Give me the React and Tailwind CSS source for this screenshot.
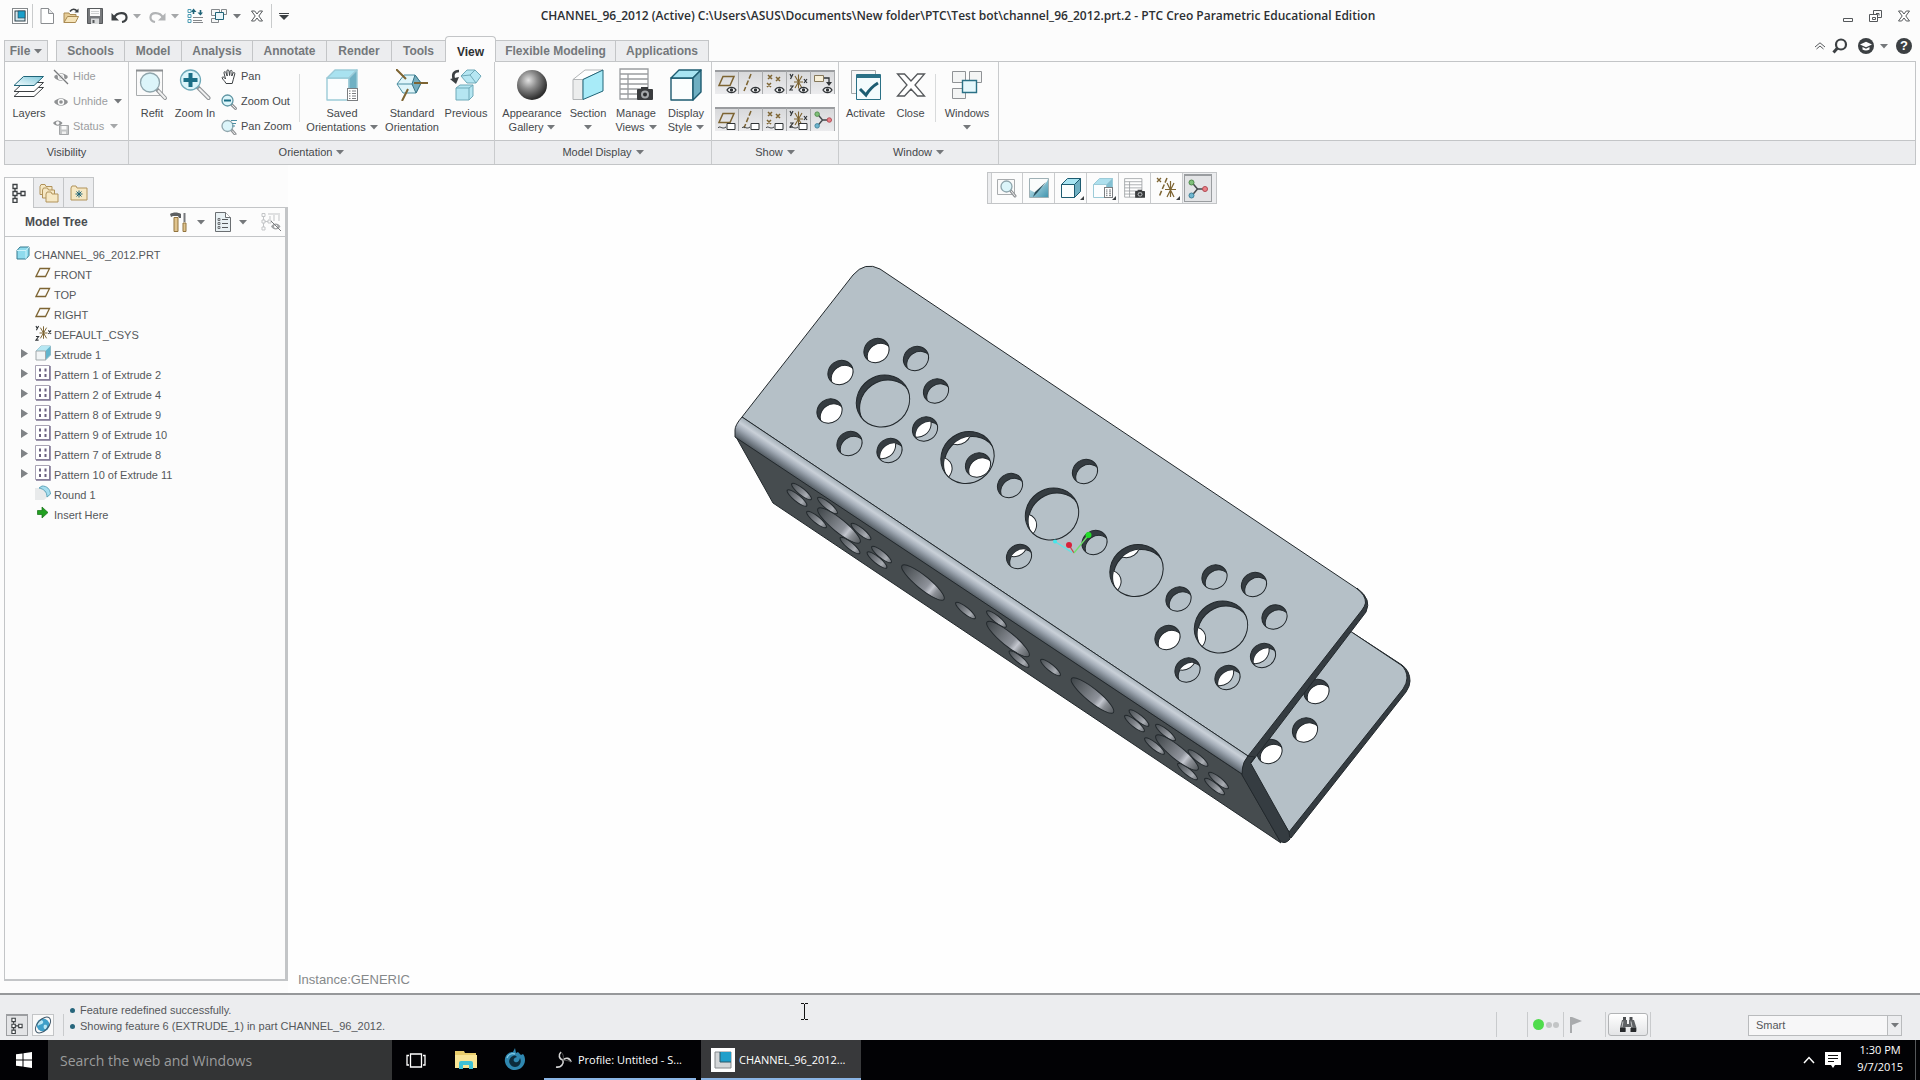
import clsx from 'clsx';

const INK = '#3c4043';
const TEAL = '#1f6478';
const GOLD = '#7d6432';

/* ---------- small shared pieces ---------- */

function Icon({ w = 16, h = 16, className, children }) {
  return (
    <svg width={w} height={h} viewBox={`0 0 ${w} ${h}`} fill="none" className={clsx('shrink-0', className)}>
      {children}
    </svg>
  );
}

function Caret({ className = 'text-[#75787b]' }) {
  return (
    <Icon w={8} h={5} className={className}>
      <path d="M0 0h8L4 4.6z" fill="currentColor" />
    </Icon>
  );
}

/* ---------- icons ---------- */

function CreoLogo({ size = 16 }) {
  return (
    <svg width={size} height={size} viewBox="0 0 16 16" className="shrink-0">
      <rect x="0.5" y="0.5" width="15" height="15" fill="#fff" stroke="#85898c" />
      <rect x="3" y="3" width="10" height="10" fill="#cfe6ee" stroke="#2b3f49" />
      <rect x="6" y="3" width="7" height="7" fill="#1a9fca" stroke="#2b3f49" strokeWidth="0.6" />
    </svg>
  );
}

function NewIcon() {
  return (
    <Icon w={14} h={16}>
      <path d="M1 .5h7.500l5 5v10H1z" fill="#fff" stroke="#8a8d90" />
      <path d="M8.500.5v5h5" fill="#e4e6e8" stroke="#8a8d90" />
    </Icon>
  );
}

function OpenIcon() {
  return (
    <Icon w={17} h={16}>
      <path d="M1 14.500V5h5l1 1.500h6V9" fill="#e6cd98" stroke="#a98a52" />
      <path d="M1 14.500 4.500 8.500h11l-3 6z" fill="#f5e3b8" stroke="#a98a52" />
      <path d="M7 3.500c2-3 5-3 7-.5" stroke={INK} strokeWidth="1.6" />
      <path d="M15.500.5v4h-4z" fill={INK} />
    </Icon>
  );
}

function SaveIcon() {
  return (
    <Icon>
      <path d="M.5.5h15v15H.5z" fill="#77797c" stroke="#56595c" />
      <path d="M3 1h10v7H3z" fill="#fafafa" />
      <path d="M4 10.500h8V16H4z" fill="#d9dbdc" />
      <path d="M5.500 12h2v3h-2z" fill="#55585b" />
      <path d="M4 3.500h8M4 5.500h8" stroke="#cfd1d2" />
    </Icon>
  );
}

function UndoIcon({ flip, color = INK }) {
  return (
    <Icon w={17} h={13} className={flip ? '-scale-x-100' : ''}>
      <path d="M3 7.500c3-5.500 12-6 12.500-.5.2 2.500-1.500 4.500-4.500 5" stroke={color} strokeWidth="2.2" />
      <path d="M.5 3v7.500H8z" fill={color} />
    </Icon>
  );
}

function RegenIcon() {
  return (
    <Icon>
      <path d="M1 1.500h3v3H1zM1 6.500h3v3H1zM1 11.500h3v3H1z" stroke="#4b9bb3" />
      <path d="M6 9.500h10M6 12.500h9M6 14.500h10" stroke="#85888b" />
      <path d="M6.500 6V3M13.500 2v4" stroke={TEAL} strokeWidth="1.6" />
      <path d="M4 4 6.500.5 9.500 4zM10.500 4.500l3 3 2.500-3z" fill={TEAL} />
    </Icon>
  );
}

function CascadeIcon() {
  return (
    <Icon>
      <path d="M.5 1.500h8v6h-8zM.5 10.500h7v4h-7zM10.500 1.500h5v5h-5z" fill="#f6f7f7" stroke="#85898c" />
      <path d="M4.500 4.500h8v7h-8z" fill="#e9f6fa" stroke={TEAL} />
    </Icon>
  );
}

function CrossIcon({ s = 12, color = '#55585b' }) {
  return (
    <svg width={s} height={s} viewBox="0 0 12 12" fill="#fff" className="shrink-0">
      <path
        d="M.5 1h3.2L6 4l2.300-3h3.200L7.800 6l3.700 5H8.300L6 8l-2.300 3H.5l3.700-5z"
        stroke={color}
      />
    </svg>
  );
}

function LayersIcon() {
  return (
    <Icon w={32} h={32}>
      <path d="M10.500 18.500h20l-9.500 9H1z" fill="#fff" stroke={INK} />
      <path d="M10.500 13.500h20l-9.500 9H1z" fill="#fff" stroke={INK} />
      <path d="M10.500 7.500h20l-9.500 9H1z" fill="url(#layerFill)" stroke={TEAL} />
      <defs>
        <linearGradient id="layerFill" x1="0" y1="1" x2="1" y2="0">
          <stop stopColor="#f4fcfe" />
          <stop offset="1" stopColor="#7fc8da" />
        </linearGradient>
      </defs>
    </Icon>
  );
}

function EyeShape({ color = '#8f9193' }) {
  return (
    <>
      <path d="M1 8c3.500-5 10.500-5 14 0-3.500 5-10.500 5-14 0z" fill={color} />
      <circle cx="8" cy="8" r="3.2" fill="#fafafa" />
      <circle cx="8" cy="8" r="1.8" fill={color} />
    </>
  );
}

function HideIcon() {
  return (
    <Icon>
      <EyeShape />
      <path d="m1 1 14 14" stroke="#fafafa" strokeWidth="3" />
      <path d="m1 1 14 14" stroke="#77797b" strokeWidth="1.2" />
    </Icon>
  );
}

function UnhideIcon() {
  return (
    <Icon>
      <EyeShape />
    </Icon>
  );
}

function StatusIcon() {
  return (
    <Icon>
      <path d="M0 4c2.500-3.500 7-3.500 9.500 0-2.500 3.500-7 3.500-9.500 0z" fill="#8f9193" />
      <circle cx="4.7" cy="4" r="1.8" fill="#fafafa" />
      <path d="M6.500 6.500h9v9h-9z" fill="#c3c5c6" stroke="#a3a5a7" />
      <path d="M8.500 7h5v3.500h-5z" fill="#fafafa" />
      <path d="M9 12.500h4V15H9z" fill="#f0f0f0" />
    </Icon>
  );
}

function Glass({ cx, cy, r, hx, hy, sw = 4, rim = '#8fa5ac', children }) {
  return (
    <>
      <path d={`M${cx + r * 0.7} ${cy + r * 0.7}L${hx} ${hy}`} stroke="#8f9295" strokeWidth={sw} strokeLinecap="round" />
      <path d={`M${cx + r * 0.9} ${cy + r * 0.9}L${hx} ${hy}`} stroke="#f0f0f0" strokeWidth={sw - 2} strokeLinecap="round" />
      <circle cx={cx} cy={cy} r={r} fill="#dcf5fa" stroke={rim} strokeWidth="1.3" />
      {children}
    </>
  );
}

function RefitIcon() {
  return (
    <Icon w={32} h={32}>
      <path d="M.5 1.500h26v25H.5z" fill="#fafafa" stroke="#a9acae" />
      <path d="M0 1.500h27" stroke="#8b8e91" strokeWidth="2" />
      <Glass cx={14} cy={13.5} r={9.5} hx={29} hy={29} />
    </Icon>
  );
}

function ZoomInIcon() {
  return (
    <Icon w={32} h={32}>
      <Glass cx={11.5} cy={11} r={10} hx={29.5} hy={29} rim="#6fa9b8">
        <path d="M11.500 4v14M4.500 11h14" stroke="#1b6f86" strokeWidth="4" />
      </Glass>
    </Icon>
  );
}

function PanIcon() {
  return (
    <Icon>
      <path
        d="M5 14.500c-1-2.500-3.500-4-3.800-5.600-.2-1.300 1.300-1.300 2.300 0L4.500 10 3 4c-.3-1.500 1.400-1.900 1.900-.5L6.200 7 5.900 2c0-1.500 1.900-1.500 2.100 0L8.600 6.500l.6-4.300c.3-1.300 2-1 1.900.4L10.800 7l1.300-3c.6-1.100 2-.5 1.700.8l-1.600 6-1 3.700z"
        fill="#fff"
        stroke={INK}
      />
    </Icon>
  );
}

function ZoomOutIcon() {
  return (
    <Icon>
      <Glass cx={6.5} cy={6.5} r={5.5} hx={14.5} hy={14.5} sw={3} rim="#5f95a3">
        <path d="M3 6.500h7" stroke="#1b6f86" strokeWidth="2" />
      </Glass>
    </Icon>
  );
}

function PanZoomIcon() {
  return (
    <Icon>
      <Glass cx={6.5} cy={7} r={5.5} hx={14} hy={15} sw={3} />
      <path d="M10 1.500h6M11 4.500h4M11 7h3" stroke="#4c8fa3" />
    </Icon>
  );
}

function Cube({ front, top, side, line, x = 0, y = 0, s = 30, d = 9 }) {
  const f = s - d;
  return (
    <g stroke={line} strokeLinejoin="round" strokeWidth={s > 20 ? 1.4 : 1}>
      <path d={`M${x} ${y + d}h${f}v${f}h${-f}z`} fill={front} />
      <path d={`M${x} ${y + d}l${d} ${-d}h${f}l${-d} ${d}z`} fill={top} />
      <path d={`M${x + f} ${y + d}l${d} ${-d}v${f}l${-d} ${d}z`} fill={side} />
    </g>
  );
}

function ListSheet({ x, y, w, h }) {
  const rows = [0, 1, 2, 3].map((i) => y + 2.5 + (i * (h - 4)) / 3.2);
  return (
    <g>
      <rect x={x} y={y} width={w} height={h} fill="#fff" stroke="#7a7d80" />
      {rows.map((r) => (
        <path key={r} d={`M${x + 1.5} ${r}h1.500M${x + 4.5} ${r}h${w - 6}`} stroke="#7a7d80" />
      ))}
    </g>
  );
}

function SavedOrientIcon({ small }) {
  if (small) {
    return (
      <Icon w={20} h={20}>
        <Cube s={19} d={6} x={0.5} y={0.5} front="#fcfeff" top="#aee0ee" side="#83c0d2" line="#9ccbd8" />
        <ListSheet x={11.5} y={9.5} w={8} h={10} />
      </Icon>
    );
  }
  return (
    <Icon w={32} h={32}>
      <Cube s={30} d={8} x={1} y={1} front="#fbfdfe" top="#a9e2f0" side="#6fb0c3" line="#9ccbd8" />
      <ListSheet x={21.5} y={19.5} w={10} h={12} />
    </Icon>
  );
}

function StandardOrientIcon() {
  return (
    <Icon w={32} h={32}>
      <path d="M8 6h11l6 8-5 10H7L1 15z" fill="#dff5fa" stroke="#4b8da0" />
      <path d="m19 6-3 9 4 9 5-10z" fill="#76aebf" stroke="#3a7688" />
      <path d="M1 15h15" stroke="#4b8da0" />
      <path d="m0 0 10 10M18 14h14M12 20 6 32" stroke={GOLD} strokeWidth="2" />
    </Icon>
  );
}

function PreviousIcon() {
  return (
    <Icon w={32} h={32}>
      <path d="m11 7 6-6h8l6 6-5 7h-9z" fill="#b5e6f2" stroke="#6fa9b8" />
      <path d="m11 7 9-1 5-5M20 6l6 8" stroke="#6fa9b8" />
      <path d="m6 19 4-3h13v11l-4 4H6z" fill="#b5e6f2" stroke="#6fa9b8" />
      <path d="M6 19h13v12M19 19l4-3" stroke="#6fa9b8" />
      <path d="M9 2C4 2 2 5 4 11" stroke={INK} strokeWidth="2.6" />
      <path d="m0 10 9-2-3 7z" fill={INK} />
    </Icon>
  );
}

function SphereIcon() {
  return (
    <Icon w={32} h={32}>
      <defs>
        <radialGradient id="sphere" cx="0.38" cy="0.34" r="0.65">
          <stop stopColor="#e2e2e2" />
          <stop offset="0.45" stopColor="#8a8a8a" />
          <stop offset="1" stopColor="#2e2e2e" />
        </radialGradient>
      </defs>
      <circle cx="16" cy="16" r="15" fill="url(#sphere)" />
    </Icon>
  );
}

function SectionIcon() {
  return (
    <Icon w={32} h={32}>
      <path d="M1 10.500 13 1h18L11 10.500z" fill="#fff" stroke="#b2b5b7" />
      <path d="M1 10.500h10v20H1z" fill="#eceded" stroke="#b2b5b7" />
      <path d="M11 10.500 31 1v21l-20 8.500z" fill="#a8ebf8" stroke={TEAL} />
    </Icon>
  );
}

function TableCameraIcon({ small }) {
  return (
    <svg width={small ? 21 : 34} height={small ? 21 : 34} viewBox="0 0 34 34" fill="none" className="shrink-0">
      <path d="M1 1h28v30H1z" fill="#fff" stroke="#9a9da0" strokeWidth="1.3" />
      <path d="M1 6h28M1 11h28M1 16h28M1 21h28M1 26h20M9 6v25" stroke="#9a9da0" strokeWidth="1.3" />
      <rect x="18" y="21" width="16" height="11" rx="1" fill="#3a3c3e" />
      <path d="M22 21v-2h7v2z" fill="#3a3c3e" />
      <circle cx="26" cy="26.5" r="4" fill="#a5a8aa" />
      <circle cx="26" cy="26.5" r="2" fill="#2c2e30" />
    </svg>
  );
}

function DisplayStyleIcon({ small }) {
  const size = small ? 20 : 32;
  return (
    <Icon w={size} h={size}>
      <Cube
        s={small ? 19 : 30}
        d={small ? 6 : 8}
        x={small ? 0.5 : 1}
        y={small ? 0.5 : 1}
        front="#fbfefe"
        top="#a8e4f2"
        side="#6fafc2"
        line="#1d5b70"
      />
    </Icon>
  );
}

function ActivateIcon() {
  return (
    <Icon w={32} h={32}>
      <path d="M1.500 1.500h24v23h-24z" fill="#f7f7f7" stroke="#a5a8aa" />
      <path d="M6.500 5.500h24v25h-24z" fill="#f3fbfd" stroke="#2b7186" />
      <path d="M6 7.500h25" stroke="#2b7186" strokeWidth="3" />
      <path d="m10 20 6 6c3-5 7-9 12-12" stroke="#1b5c72" strokeWidth="3" />
    </Icon>
  );
}

function CloseBigIcon() {
  return (
    <Icon w={30} h={32}>
      <path
        d="M1.500 5h7L15 12l6.500-7h7L19 16l9.500 11h-7L15 20l-6.500 7h-7L11 16z"
        fill="#fff"
        stroke="#55585b"
        strokeWidth="1.3"
      />
    </Icon>
  );
}

function WindowsIcon() {
  return (
    <Icon w={32} h={32}>
      <path d="M1.500 2.500h13v11h-13zM18.500 2.500h12v11h-12zM1.500 19.500h13v10h-13z" fill="#f4f5f5" stroke="#909396" />
      <path d="M11.500 11.500h14v12h-14z" fill="#e6f8fc" stroke="#2b7186" strokeWidth="1.4" />
    </Icon>
  );
}

function TinyEye() {
  return (
    <g>
      <path d="M10 17c2-3.500 7-3.500 9 0-2 3.500-7 3.500-9 0z" fill="#fff" stroke="#303437" strokeWidth="1.3" />
      <circle cx="14.5" cy="17" r="1.7" fill="#303437" />
    </g>
  );
}

function TinyTag() {
  return (
    <g>
      <path d="M10 13.500h8v6h-8z" fill="#fff" stroke="#303437" />
      <path d="M1 18c2-3 4 2 8-1" stroke="#303437" />
    </g>
  );
}

function DatumGlyph({ kind }) {
  const stroke = { stroke: GOLD, strokeWidth: 1.5 };
  switch (kind) {
    case 'plane':
      return <path d="M6 3.500h11l-4 9H2z" {...stroke} />;
    case 'axis':
      return <path d="M10 1 3 18" {...stroke} strokeDasharray="5 2" />;
    case 'point':
      return <path d="m3 2 4 4m0-4L3 6M11 4l4 4m0-4-4 4M2 10l4 4m0-4-4 4" {...stroke} />;
    case 'csys':
      return (
        <g>
          <path d="M9.500 1.500v14M5 9h9M6 3l7 12M13 3 6 15" {...stroke} strokeWidth="1.1" />
          <path d="m1 1 1.500 3M4 1 1.500 6M1 13h3l-3 4h3M15 6l3 4m0-4-3 4" stroke="#303437" strokeWidth="1.2" />
        </g>
      );
    case 'annot':
      return (
        <g>
          <path d="M1.500 2.500h9v6h-9z" fill="#f7efd8" stroke="#85785a" />
          <path d="M11 5h5v6" stroke="#303437" strokeWidth="1.3" />
          <path d="M13 9h6l-3 4z" fill="#303437" />
        </g>
      );
    default:
      return null;
  }
}

function SpinCenter({ size = 20 }) {
  return (
    <svg width={size} height={size} viewBox="0 0 20 20" fill="none" className="shrink-0">
      <path d="m3.500 3 6 7h8M9.500 10l-6 7" stroke="#44484b" strokeWidth="1.5" />
      <circle cx="3.5" cy="3.5" r="2.5" fill="#7fc07a" stroke="#4f8b4b" />
      <circle cx="17" cy="10" r="2.5" fill="#ea7f86" stroke="#b04a52" />
      <circle cx="3.5" cy="16.5" r="2.5" fill="#6fb6cf" stroke="#3e8199" />
    </svg>
  );
}

function SearchDarkIcon() {
  return (
    <Icon>
      <circle cx="9" cy="6.5" r="5" stroke={INK} strokeWidth="2.2" />
      <path d="m5.500 10-4 4.500" stroke={INK} strokeWidth="3" />
    </Icon>
  );
}

function LearnIcon() {
  return (
    <Icon>
      <circle cx="8" cy="8" r="8" fill={INK} />
      <path d="m2 6.500 6-2.800 6 2.800-6 2.800z" fill="#fff" />
      <path d="M4.500 9v2.500c2 1.300 5 1.300 7 0V9L8 10.700z" fill="#fff" />
    </Icon>
  );
}

function HelpIcon() {
  return (
    <span className="flex size-4 items-center justify-center rounded-full bg-[#3c4043] text-[13px] leading-4 font-bold text-white">
      ?
    </span>
  );
}

function TreeGlyph() {
  return (
    <Icon w={14} h={20}>
      <path d="M1 1.500h4v4H1zM1 8.500h4v4H1zM1 15.500h4v4H1zM9 8.500h4v4H9z" fill="#fff" stroke={INK} strokeWidth="1.3" />
      <path d="M3 6v2M3 13v2M5 10.500h4" stroke={INK} strokeWidth="1.3" />
    </Icon>
  );
}

function Folder({ x, y, w = 12, h = 9 }) {
  return (
    <path
      d={`M${x} ${y + h}v${-h + 1}l1-2h4l1 2h${w - 6}v${h - 1}z`}
      fill="#f6e8c4"
      stroke="#b1935b"
    />
  );
}

function FoldersIcon() {
  return (
    <Icon w={20} h={20}>
      <Folder x={1} y={2.5} />
      <Folder x={3.5} y={6} />
      <Folder x={7} y={10} />
    </Icon>
  );
}

function FavFolderIcon() {
  return (
    <Icon w={18} h={18}>
      <Folder x={1} y={3} w={16} h={13} />
      <path d="M9 6.500v7M5.500 10h7M6.500 7.500l5 5M11.500 7.500l-5 5" stroke={TEAL} />
    </Icon>
  );
}

function ToolsIcon() {
  return (
    <Icon w={17} h={20}>
      <path d="M0 2c3-2 8-2 11 0v4H9L8 4H3L1 5z" fill="#5c5f62" />
      <path d="M4 5.500h4v14H4z" fill="#e0c48e" stroke="#92743e" />
      <path d="M14.500 1v9" stroke="#77797c" strokeWidth="2" />
      <path d="M13 11h3v8.500h-3z" fill="#e0c48e" stroke="#92743e" />
    </Icon>
  );
}

function SettingsDocIcon() {
  return (
    <Icon w={16} h={20}>
      <path d="M.5.5h10l5 5v14H.5z" fill="#e9f1f4" stroke="#6b6f72" />
      <path d="M10.500.5v5h5" fill="#fff" stroke="#6b6f72" />
      <path d="M7 7.500h6M7 11.500h6M7 15.500h6" stroke="#55585b" />
      <path d="M3 6.500h2v2H3zM3 10.500h2v2H3zM3 14.500h2v2H3z" stroke="#55585b" strokeWidth="0.8" />
    </Icon>
  );
}

function TreeHideIcon() {
  return (
    <Icon w={20} h={20}>
      <path d="M1 1.500h3v3H1zM1 8h3v3H1zM1 15h3v3H1zM7 8h3v3H7zM7 2h12M9 4v3M13 3v6M18 3v6M2.500 5v3M2.500 11v4M4 9.500h3" stroke="#c3c5c7" />
      <path d="M10 14.500c2.500-4 7-4 9.500 0-2.500 4-7 4-9.500 0z" fill="#a1a3a5" />
      <circle cx="14.7" cy="14.5" r="1.7" fill="#fff" />
      <path d="m10 9 10 10" stroke="#77797c" />
    </Icon>
  );
}

function PartIcon() {
  return (
    <Icon w={14} h={14}>
      <path d="M1 4.500 4 1h9v8.500L10 13H1z" fill="#8fdbed" stroke="#357b90" />
      <path d="M1 4.500h9V13M10 4.500 13 1" stroke="#cff3fa" />
    </Icon>
  );
}

function PlaneIcon() {
  return (
    <Icon w={16} h={16}>
      <path d="M5 3.500h9.500l-4 8H1z" stroke={GOLD} strokeWidth="1.3" />
    </Icon>
  );
}

function CsysIcon() {
  return (
    <svg width="17" height="16" viewBox="0 0 19 18" fill="none" className="shrink-0">
      <DatumGlyph kind="csys" />
    </svg>
  );
}

function ExtrudeIcon() {
  return (
    <Icon w={16} h={16}>
      <path d="m1 6 5-5h9.500v9l-5 5z" fill="#62b4cc" stroke="#8cb9c6" />
      <path d="M1 6h9.500l5-5H6z" fill="#b6e7f3" />
      <path d="M1 6h9.500v9H1z" fill="#f1f4f5" stroke="#a1a8ab" />
    </Icon>
  );
}

function PatternIcon() {
  return (
    <Icon w={16} h={16}>
      <path d="M.5.5h14v14H.5z" fill="#fff" stroke="#a9a3b5" />
      <path d="M15 1v14H1" stroke="#7c7391" strokeWidth="1.5" />
      <path d="M4 3.500h2v3H4zM9.500 3.500h2v3h-2zM4 9h2v3H4zM9.500 9h2v3h-2z" fill="#6b617f" />
    </Icon>
  );
}

function RoundIcon() {
  return (
    <Icon w={16} h={16}>
      <path d="M0 3h7c5 1 7 4 7 8l-5 4H0z" fill="#e8eaeb" />
      <path d="m4 3 3-2c5 0 8 3 8.500 8L12 12c0-5-3-8-8-9z" fill="#a5def0" stroke="#5fa4b9" />
    </Icon>
  );
}

function InsertIcon() {
  return (
    <Icon w={16} h={16}>
      <path d="M2.500 5.500h4.500V2l6 5.500-6 5.500V9.500H2.500z" fill="#21a021" stroke="#156d15" strokeWidth="0.7" />
    </Icon>
  );
}

/* ---------- title bar ---------- */

function IconButton({ label, className, children }) {
  return (
    <button type="button" aria-label={label} className={clsx('flex items-center justify-center', className)}>
      {children}
    </button>
  );
}

function TitleBar() {
  return (
    <header className="flex h-8 items-center pl-3">
      <CreoLogo />
      <span className="ml-1 h-6 w-px bg-[#c9cbcc]" />
      <IconButton label="New" className="ml-0.5 w-6"><NewIcon /></IconButton>
      <IconButton label="Open" className="w-6"><OpenIcon /></IconButton>
      <IconButton label="Save" className="w-6"><SaveIcon /></IconButton>
      <IconButton label="Undo" className="w-6"><UndoIcon /></IconButton>
      <IconButton label="Undo list" className="w-3"><Caret className="text-[#a5a7a9]" /></IconButton>
      <IconButton label="Redo" className="w-7"><UndoIcon flip color="#b1b3b5" /></IconButton>
      <IconButton label="Redo list" className="w-2"><Caret className="text-[#a5a7a9]" /></IconButton>
      <IconButton label="Regenerate" className="ml-1 w-6"><RegenIcon /></IconButton>
      <IconButton label="Windows" className="w-6"><CascadeIcon /></IconButton>
      <IconButton label="Windows list" className="w-3"><Caret /></IconButton>
      <IconButton label="Close window" className="w-7"><CrossIcon /></IconButton>
      <span className="h-6 w-px bg-[#c9cbcc]" />
      <IconButton label="Customize" className="w-6">
        <Icon w={10} h={7}>
          <path d="M0 .5h10" stroke={INK} />
          <path d="M0 2h10L5 7z" fill={INK} />
        </Icon>
      </IconButton>
      <h1 className="min-w-0 flex-1 truncate text-center font-['Open_Sans','Noto_Sans',sans-serif] text-[12px] leading-4 font-semibold text-[#2c2f32]">
        CHANNEL_96_2012 (Active) C:\Users\ASUS\Documents\New folder\PTC\Test bot\channel_96_2012.prt.2 - PTC Creo Parametric Educational Edition
      </h1>
      <div className="flex w-[300px] items-center justify-end gap-4 pr-[10px]">
        <IconButton label="Minimize">
          <Icon w={10} h={12}><path d="M.5 8.500h9v3h-9z" stroke="#55585b" /></Icon>
        </IconButton>
        <IconButton label="Restore">
          <Icon w={13} h={12}>
            <path d="M4.500.5h8v7h-8z" stroke="#55585b" />
            <path d="M.5 4.500h8v7h-8z" fill="#fff" stroke="#55585b" />
            <path d="M3.500 7.500h3v2h-3zM7 3.500h3v2" stroke="#55585b" />
          </Icon>
        </IconButton>
        <IconButton label="Close"><CrossIcon /></IconButton>
      </div>
    </header>
  );
}

/* ---------- ribbon ---------- */

const TABS = [
  { name: 'Schools', width: 'w-[69px]' },
  { name: 'Model', width: 'w-[57px]' },
  { name: 'Analysis', width: 'w-[71px]' },
  { name: 'Annotate', width: 'w-[74px]' },
  { name: 'Render', width: 'w-[65px]' },
  { name: 'Tools', width: 'w-[53px]' },
  { name: 'View', width: 'w-[51px]', active: true },
  { name: 'Flexible Modeling', width: 'w-[120px]' },
  { name: 'Applications', width: 'w-[93px]' },
];

function TabBar() {
  return (
    <nav className="relative z-10 -mb-px flex h-[30px] items-end pl-1 text-[12px] font-bold text-[#74787b]">
      <button type="button" className="mr-2 flex h-[22px] w-11 items-center justify-center gap-1 border border-[#c3c5c7] bg-[#ecedef]">
        File <Caret />
      </button>
      {TABS.map((tab, i) => (
        <button
          key={tab.name}
          type="button"
          className={clsx(
            'border-[#c3c5c7] whitespace-nowrap',
            tab.width,
            tab.active
              ? 'h-[26px] rounded-t-sm border border-b-0 bg-[#fcfcfc] pt-1 text-[#2c3033]'
              : 'h-[22px] border-y bg-[#ecedef]',
            i === 0 && 'border-l',
            !tab.active && i !== 5 && 'border-r',
          )}
        >
          {tab.name}
        </button>
      ))}
      <div className="mb-2 ml-auto flex h-4 items-center pr-2">
        <IconButton label="Minimize ribbon" className="w-5">
          <Icon w={12} h={8}>
            <path d="M1 5 6 .8 11 5M2.500 7 6 4l3.500 3" stroke="#55585b" />
          </Icon>
        </IconButton>
        <IconButton label="Command search" className="mr-1 w-5"><SearchDarkIcon /></IconButton>
        <IconButton label="Learning" className="w-6"><LearnIcon /></IconButton>
        <IconButton label="Learning list" className="w-3"><Caret /></IconButton>
        <IconButton label="Help" className="ml-1.5"><HelpIcon /></IconButton>
      </div>
    </nav>
  );
}

function BigButton({ icon, lines, caret, caretBelow, width }) {
  return (
    <button type="button" className={clsx('flex shrink-0 flex-col items-center pt-1 leading-[14px] whitespace-nowrap', width)}>
      <span className="flex h-[38px] items-center justify-center">{icon}</span>
      <span className="mt-0.5">{lines[0]}</span>
      {lines[1] && (
        <span className="flex items-center gap-1">
          {lines[1]}
          {caret && <Caret />}
        </span>
      )}
      {caretBelow && <span className="flex h-[14px] items-center"><Caret /></span>}
    </button>
  );
}

function SmallButton({ icon, label, caret, disabled }) {
  return (
    <button
      type="button"
      disabled={disabled}
      className={clsx('flex h-[25px] items-center gap-1 whitespace-nowrap', disabled && 'text-[#9b9da0]')}
    >
      {icon}
      {label}
      {caret && <Caret className={clsx('ml-0.5', caret)} />}
    </button>
  );
}

function Group({ label, caret, width, children }) {
  return (
    <section className={clsx('flex shrink-0 flex-col border-r border-[#c9cbcd]', width)}>
      <div className="flex flex-1">{children}</div>
      <div className="flex h-6 items-center justify-center gap-1 border-t border-[#c3c5c7] bg-[#ecedef]">
        {label}
        {caret && <Caret />}
      </div>
    </section>
  );
}

function Divider() {
  return <span className="mt-3 h-12 w-px shrink-0 bg-[#d8dadb]" />;
}

const DATUMS = ['plane', 'axis', 'point', 'csys', 'annot'];

function ShowCell({ label, children }) {
  return (
    <button
      type="button"
      aria-label={label}
      className="flex h-6 w-6 items-center justify-center border-t-2 border-r border-t-[#9a9c9f] border-r-[#a9abad] bg-linear-to-b from-[#d8d9db] to-[#ececee]"
    >
      {children}
    </button>
  );
}

function ShowGroup() {
  return (
    <Group label="Show" caret width="w-[127px]">
      <div className="flex flex-col gap-[13px] pt-2 pl-[3px]">
        <div className="flex">
          {DATUMS.map((kind) => (
            <ShowCell key={kind} label={`${kind} display`}>
              <Icon w={20} h={21}>
                <DatumGlyph kind={kind} />
                <TinyEye />
              </Icon>
            </ShowCell>
          ))}
        </div>
        <div className="flex">
          {DATUMS.slice(0, 4).map((kind) => (
            <ShowCell key={kind} label={`${kind} tag display`}>
              <Icon w={20} h={21}>
                <DatumGlyph kind={kind} />
                <TinyTag />
              </Icon>
            </ShowCell>
          ))}
          <ShowCell label="Spin center"><SpinCenter size={18} /></ShowCell>
        </div>
      </div>
    </Group>
  );
}

function Ribbon() {
  return (
    <div className="mx-1 flex h-[104px] border border-[#c3c5c7] bg-[#fcfcfc] text-[11px] text-[#45484b]">
      <Group label="Visibility" width="w-[124px]">
        <BigButton icon={<LayersIcon />} lines={['Layers']} width="w-12" />
        <div className="flex flex-col pt-0.5">
          <SmallButton icon={<HideIcon />} label="Hide" disabled />
          <SmallButton icon={<UnhideIcon />} label="Unhide" caret="text-[#75787b]" disabled />
          <SmallButton icon={<StatusIcon />} label="Status" caret="text-[#a5a7a9]" disabled />
        </div>
      </Group>

      <Group label="Orientation" caret width="w-[366px]">
        <BigButton icon={<RefitIcon />} lines={['Refit']} width="w-[46px]" />
        <BigButton icon={<ZoomInIcon />} lines={['Zoom In']} width="w-10" />
        <div className="flex w-[84px] flex-col pt-0.5 pl-1.5">
          <SmallButton icon={<PanIcon />} label="Pan" />
          <SmallButton icon={<ZoomOutIcon />} label="Zoom Out" />
          <SmallButton icon={<PanZoomIcon />} label="Pan Zoom" />
        </div>
        <Divider />
        <BigButton icon={<SavedOrientIcon />} lines={['Saved', 'Orientations']} caret width="w-[84px]" />
        <BigButton icon={<StandardOrientIcon />} lines={['Standard', 'Orientation']} width="w-14" />
        <BigButton icon={<PreviousIcon />} lines={['Previous']} width="w-[52px]" />
      </Group>

      <Group label="Model Display" caret width="w-[217px]">
        <BigButton icon={<SphereIcon />} lines={['Appearance', 'Gallery']} caret width="w-[74px]" />
        <BigButton icon={<SectionIcon />} lines={['Section']} caretBelow width="w-[38px]" />
        <BigButton icon={<TableCameraIcon />} lines={['Manage', 'Views']} caret width="w-[58px]" />
        <BigButton icon={<DisplayStyleIcon />} lines={['Display', 'Style']} caret width="w-[42px]" />
      </Group>

      <ShowGroup />

      <Group label="Window" caret width="w-[160px]">
        <BigButton icon={<ActivateIcon />} lines={['Activate']} width="w-[53px]" />
        <BigButton icon={<CloseBigIcon />} lines={['Close']} width="w-[37px]" />
        <span className="w-1.5" />
        <Divider />
        <BigButton icon={<WindowsIcon />} lines={['Windows']} caretBelow width="w-[62px]" />
      </Group>

      <div className="flex flex-1 flex-col justify-end">
        <div className="h-6 border-t border-[#c3c5c7] bg-[#ecedef]" />
      </div>
    </div>
  );
}

/* ---------- model tree ---------- */

const TREE = [
  { label: 'FRONT', icon: PlaneIcon },
  { label: 'TOP', icon: PlaneIcon },
  { label: 'RIGHT', icon: PlaneIcon },
  { label: 'DEFAULT_CSYS', icon: CsysIcon },
  { label: 'Extrude 1', icon: ExtrudeIcon, open: true },
  { label: 'Pattern 1 of Extrude 2', icon: PatternIcon, open: true },
  { label: 'Pattern 2 of Extrude 4', icon: PatternIcon, open: true },
  { label: 'Pattern 8 of Extrude 9', icon: PatternIcon, open: true },
  { label: 'Pattern 9 of Extrude 10', icon: PatternIcon, open: true },
  { label: 'Pattern 7 of Extrude 8', icon: PatternIcon, open: true },
  { label: 'Pattern 10 of Extrude 11', icon: PatternIcon, open: true },
  { label: 'Round 1', icon: RoundIcon },
  { label: 'Insert Here', icon: InsertIcon },
];

function TreePanel() {
  return (
    <aside className="flex w-[288px] shrink-0 flex-col pt-3 pb-3 pl-1 text-[11px] text-[#55585b]">
      <div className="relative z-10 -mb-px flex">
        <IconButton label="Model Tree" className="h-[31px] w-[30px] border border-b-0 border-[#c3c5c7] bg-[#fcfcfc]">
          <TreeGlyph />
        </IconButton>
        <IconButton label="Folder Browser" className="h-[31px] w-[30px] border border-l-0 border-[#c3c5c7] bg-[#ecedef]">
          <FoldersIcon />
        </IconButton>
        <IconButton label="Favorites" className="h-[31px] w-[30px] border border-l-0 border-[#c3c5c7] bg-[#ecedef]">
          <FavFolderIcon />
        </IconButton>
      </div>
      <div className="flex flex-1 flex-col border border-r-3 border-b-2 border-[#c3c5c7] bg-[#fcfcfc]">
        <div className="flex h-[29px] items-center border-b border-[#c3c5c7] pr-1 pl-5">
          <h2 className="flex-1 text-[12px] font-bold text-[#4a4d50]">Model Tree</h2>
          <IconButton label="Tools"><ToolsIcon /></IconButton>
          <IconButton label="Tools list" className="ml-2 w-3"><Caret /></IconButton>
          <IconButton label="Settings" className="ml-2"><SettingsDocIcon /></IconButton>
          <IconButton label="Settings list" className="ml-1.5 w-3"><Caret /></IconButton>
          <IconButton label="Show" className="ml-3"><TreeHideIcon /></IconButton>
        </div>
        <ul className="pt-2">
          <li>
            <div className="flex h-5 items-center gap-1 pl-[11px]">
              <span className="-mt-1"><PartIcon /></span>
              CHANNEL_96_2012.PRT
            </div>
            <ul>
              {TREE.map((node) => (
                <li key={node.label} className="flex h-5 items-center pl-4">
                  <span className="flex w-[14px] shrink-0 items-center">
                    {node.open && (
                      <Icon w={7} h={9} className="mb-1">
                        <path d="M0 0v9l7-4.500z" fill="#808386" />
                      </Icon>
                    )}
                  </span>
                  <span className="mb-1 flex w-[19px] shrink-0 items-center"><node.icon /></span>
                  {node.label}
                </li>
              ))}
            </ul>
          </li>
        </ul>
      </div>
    </aside>
  );
}

/* ---------- graphics area ---------- */

const EDGE = '#22282c';
const FACE = '#b5c0c7';
const DARK = '#353c41';

// "see" lists the lower holes that show through, as offsets from the hole's centre
const BIG_HOLES = [
  { x: 883, y: 401, see: [] },
  { x: 967.5, y: 457.5, see: [[-28, 12], [-9, -25]], nested: [978, 465] },
  { x: 1052, y: 514, see: [[-28, 12]] },
  { x: 1136.5, y: 570.5, see: [[-28, 12], [-9, -25]] },
  { x: 1221, y: 627, see: [[-28, 12]] },
];

const OPEN_HOLES = [[876.5, 350.5], [840.5, 372.5], [829.5, 411], [1167.5, 637.5]];
const SHUT_HOLES = [
  [916, 358.5], [936, 391], [849.5, 443.5], [1010, 485.5], [1085, 471.5], [1094.5, 542.5],
  [1178.5, 599], [1214.5, 577], [1254, 584.5], [1274.5, 617],
];
const HALF_HOLES = [[889.5, 450.5], [925, 429], [1227.5, 677.5], [1263, 655.5]];
const SLIT_HOLES = [[1019, 556.5], [1187.5, 670]];
const LOWER_HOLES = [[1316.5, 691.5], [1305, 730], [1269.5, 751.5]];

const SMALL_HOLES = [
  ...OPEN_HOLES.map(([x, y]) => ({ x, y, open: true })),
  ...SHUT_HOLES.map(([x, y]) => ({ x, y, see: [] })),
  ...HALF_HOLES.map(([x, y]) => ({ x, y, see: [[-6.5, -4]] })),
  ...SLIT_HOLES.map(([x, y]) => ({ x, y, see: [[-4, -12]] })),
];

const WEB_BIG = [[839, 525.5], [923, 582.5], [1008, 639], [1092.5, 695.5], [1177, 752.5]];
const WEB_SMALL = [
  [801.5, 491.5], [797, 498], [827.5, 505.5], [816.5, 519.5], [861, 531.5], [850, 545.5], [881.5, 554.5], [877, 560],
  [965.5, 610.5], [996.5, 619], [1019, 659], [1050.5, 667.5], [1139, 718], [1134.5, 723.5], [1165.5, 732.5],
  [1154.5, 746], [1198, 758], [1187.5, 771.5], [1218.5, 780.5], [1214.5, 786.5],
];

function Oval({ x, y, big, ...rest }) {
  return (
    <ellipse
      cx={x}
      cy={y}
      rx={big ? 27.3 : 13}
      ry={big ? 25.3 : 11.7}
      transform={`rotate(-35 ${x} ${y})`}
      {...rest}
    />
  );
}

function Hole({ x, y, big, open, see = [], nested }) {
  const id = `h${Math.round(x)}-${Math.round(y)}`;
  return (
    <g>
      <clipPath id={id}><Oval x={x} y={y} big={big} /></clipPath>
      <clipPath id={`${id}i`}><Oval x={x + 3.3} y={y + 5} big={big} /></clipPath>
      <Oval x={x} y={y} big={big} fill={DARK} />
      <g clipPath={`url(#${id})`}>
        <Oval x={x + 3.3} y={y + 5} big={big} fill={open ? '#fff' : FACE} stroke={EDGE} />
        <g clipPath={`url(#${id}i)`}>
          {see.map(([dx, dy]) => (
            <Oval key={dx} x={x + dx} y={y + dy} fill="#fff" stroke={EDGE} />
          ))}
          {nested && <Hole x={nested[0]} y={nested[1]} open />}
        </g>
      </g>
      <Oval x={x} y={y} big={big} stroke={EDGE} fill="none" />
    </g>
  );
}

function WebHole({ x, y, big }) {
  return (
    <ellipse
      cx={x}
      cy={y}
      rx={big ? 27 : 12.5}
      ry={big ? 6.5 : 3.3}
      transform={`rotate(39 ${x} ${y})`}
      fill={big ? 'url(#boreBig)' : 'url(#bore)'}
      stroke={EDGE}
    />
  );
}

function ChannelModel() {
  return (
    <svg viewBox="288 165 1632 828" className="absolute inset-0 size-full" fill="none" strokeLinejoin="round">
      <defs>
        <linearGradient id="bend" gradientUnits="userSpaceOnUse" x1="995" y1="587" x2="984" y2="603.5">
          <stop stopColor="#a9b4bc" />
          <stop offset="0.25" stopColor="#c9d0d8" />
          <stop offset="0.5" stopColor="#a3acb7" />
          <stop offset="0.8" stopColor="#6f7881" />
          <stop offset="1" stopColor="#4e565c" />
        </linearGradient>
        <linearGradient id="bore">
          <stop stopColor="#4a5054" />
          <stop offset="0.45" stopColor="#7b7f85" />
          <stop offset="0.75" stopColor="#a9adb3" />
          <stop offset="1" stopColor="#6b6f74" />
        </linearGradient>
        <linearGradient id="boreBig">
          <stop stopColor="#3f4549" />
          <stop offset="0.3" stopColor="#666b70" />
          <stop offset="0.6" stopColor="#8f939b" />
          <stop offset="0.7" stopColor="#c3c6ce" />
          <stop offset="0.8" stopColor="#8b8f95" />
          <stop offset="1" stopColor="#565b5f" />
        </linearGradient>
      </defs>

      {/* lower flange */}
      <path d="M1353 633 1402 665Q1410 671 1410 681 1410 686 1406 692L1291 838 1285 832 1400 690z" fill={DARK} stroke={EDGE} />
      <path d="M1344 627 1401 665Q1407 670 1407 678 1407 683 1403 689L1289 832 1245 760z" fill={FACE} stroke={EDGE} />
      {LOWER_HOLES.map(([x, y]) => <Hole key={x} x={x} y={y} open />)}

      {/* web */}
      <path d="M735.5 436 773 503 1281 843 1242 774z" fill="#464c4f" stroke={EDGE} />
      {WEB_SMALL.map(([x, y]) => <WebHole key={x} x={x} y={y} />)}
      {WEB_BIG.map(([x, y]) => <WebHole key={x} x={x} y={y} big />)}

      {/* upper flange: rim first, then the face over it */}
      <path d="M1357 588Q1365 594 1367 600 1369 605 1366 612L1251 763 1246 757z" fill={DARK} stroke={EDGE} />
      <path
        d="M742 417 853 275Q865 261 880 269L1356 588Q1366 595 1365.5 603 1365 606 1362 610L1248 756z"
        fill={FACE}
        stroke={EDGE}
      />
      <path d="M742 417Q735 425 735 430V437L1242 774 1248 756z" fill="url(#bend)" stroke={EDGE} />

      {/* end face of the bend and web */}
      <path d="M1248 756Q1243 762 1242.5 768L1242 775 1280 841Q1285 845 1290 839L1289 832 1250.5 763 1255 757z" fill={DARK} stroke={EDGE} />

      {SMALL_HOLES.map((h) => <Hole key={`${h.x}-${h.y}`} {...h} />)}
      {BIG_HOLES.map((h) => <Hole key={h.x} big {...h} />)}

      {/* spin centre */}
      <path d="M1055 541.5 1072 552.500" stroke="#5fe3e6" strokeWidth="1.3" />
      <path d="M1069 545 1074 553" stroke="#c4424c" strokeWidth="1.3" />
      <path d="M1088.5 535 1074 553" stroke="#6fe06a" strokeWidth="1.3" />
      <circle cx="1055" cy="541.5" r="2" fill="#45e6ea" />
      <circle cx="1069" cy="545" r="3" fill="#d9213a" />
      <circle cx="1088.5" cy="535" r="3" fill="#22dc28" />
    </svg>
  );
}

function Corner() {
  return (
    <svg width="4" height="4" viewBox="0 0 4 4" className="absolute right-0.5 bottom-[3px]">
      <path d="M4 0v4H0z" fill={INK} />
    </svg>
  );
}

const VIEW_TOOLS = [
  {
    label: 'Refit',
    icon: (
      <Icon w={20} h={20}>
        <path d="M.5 1.500h17v15H.5z" fill="#fafafa" stroke="#a9acae" />
        <Glass cx={9.5} cy={8.5} r={5.5} hx={18} hy={18} sw={3} />
      </Icon>
    ),
  },
  {
    label: 'Repaint',
    icon: (
      <Icon w={20} h={20}>
        <defs>
          <linearGradient id="paint" x1="0" y1="0" x2="1" y2="1">
            <stop stopColor="#d9f3f9" />
            <stop offset="1" stopColor="#3f93ad" />
          </linearGradient>
        </defs>
        <path d="M.5.5h19v19H.5z" fill="url(#paint)" stroke="#9fb0b5" />
        <path d="M1 1h18C17 8 8 11 7 15l-6-3z" fill="#fafcfc" />
        <path d="M17 4 8 15l-4 4 2-5z" fill="#2a4f5c" />
      </Icon>
    ),
  },
  { label: 'Display Style', icon: <DisplayStyleIcon small />, menu: true },
  { label: 'Saved Orientations', icon: <SavedOrientIcon small />, menu: true },
  { label: 'View Manager', icon: <TableCameraIcon small /> },
  {
    label: 'Datum Display Filters',
    menu: true,
    icon: (
      <Icon w={22} h={22}>
        <path d="m1 1 4 4m0-4L1 5" stroke={GOLD} strokeWidth="1.3" />
        <path d="M11 1 3 20" stroke={GOLD} strokeWidth="1.5" strokeDasharray="5 2" />
        <path d="M14.500 4v16M9 12.500h11M11 6l7 14M18 6l-7 14" stroke={GOLD} strokeWidth="1.2" />
      </Icon>
    ),
  },
];

function GraphicsArea() {
  return (
    <main className="relative flex-1 overflow-hidden bg-[#fefefe]">
      <ChannelModel />
      <div className="relative flex justify-center pt-[7px] pr-1">
        <div className="flex h-8 border border-[#c3c5c7] bg-[#ecedef] px-[3px]">
          {VIEW_TOOLS.map((tool) => (
            <IconButton key={tool.label} label={tool.label} className="relative w-8 border-r border-[#c9cbcd] bg-[#fcfcfc] first:border-l">
              {tool.icon}
              {tool.menu && <Corner />}
            </IconButton>
          ))}
          <IconButton label="Spin Center" className="m-px w-7 border border-t-2 border-[#9a9da0] bg-[#e3e4e6]">
            <SpinCenter />
          </IconButton>
        </div>
      </div>
      <p className="absolute bottom-1 left-[10px] text-[13px] leading-[18px] text-[#85888a]">Instance:GENERIC</p>
    </main>
  );
}

/* ---------- status bar ---------- */

function StatusBar() {
  return (
    <footer className="relative flex h-[47px] shrink-0 items-end border-t-2 border-[#96989a] bg-[#ecedef] text-[11px] text-[#55585b]">
      <IconButton label="Toggle tree" className="mb-1 ml-1.5 size-[22px] border border-t-2 border-[#9c9ea1] bg-[#e3e4e6]">
        <svg width="12" height="17" viewBox="0 0 14 20" fill="none">
          <path d="M1 1.500h4v4H1zM1 8.500h4v4H1zM1 15.500h4v4H1zM9 8.500h4v4H9z" fill="#fff" stroke={INK} strokeWidth="1.3" />
          <path d="M3 6v2M3 13v2M5 10.500h4" stroke={INK} strokeWidth="1.3" />
        </svg>
      </IconButton>
      <IconButton label="Toggle browser" className="mb-1 ml-1 size-[22px] border border-[#c3c5c7] bg-[#f9f9f9]">
        <Icon w={18} h={18}>
          <circle cx="9" cy="9" r="6.5" fill="#3f9fc9" />
          <path d="M5 5c3-2 5 0 4 2s-4 1-5 3c-1-2 0-4 1-5zM10 9c3-1 4 1 2 4-2 1-3-2-2-4z" fill="#b9e6f4" />
          <ellipse cx="9" cy="9" rx="9.5" ry="5.5" transform="rotate(-48 9 9)" stroke="#41596b" />
        </Icon>
      </IconButton>
      <span className="mb-1 ml-[9px] h-[22px] w-px bg-[#c9cbcd]" />
      <ul className="mb-1.5 ml-1.5 flex-1">
        {['Feature redefined successfully.', 'Showing feature 6 (EXTRUDE_1) in part CHANNEL_96_2012.'].map((line) => (
          <li key={line} className="flex h-4 items-center gap-[5px]">
            <span className="size-[5px] rounded-full bg-[#27667c]" />
            {line}
          </li>
        ))}
      </ul>
      <div className="mb-[3px] flex h-[25px] items-center">
        <span className="h-full w-px bg-[#c9cbcd]" />
        <span className="ml-[30px] h-full w-px bg-[#c9cbcd]" />
        <span className="ml-[5px] size-[11px] rounded-full bg-[#4fdc4b]" />
        <span className="ml-[2px] size-1.5 rounded-full bg-[#c3c5c6]" />
        <span className="ml-px size-1.5 rounded-full bg-[#c3c5c6]" />
        <span className="ml-1 h-full w-px bg-[#c9cbcd]" />
        <Icon w={12} h={16} className="ml-1.5">
          <path d="M0 0h2v16H0z" fill="#a9abad" />
          <path d="m2 0 10 4-10 4z" fill="#a9abad" />
        </Icon>
        <span className="ml-[23px] h-full w-px bg-[#c9cbcd]" />
        <button type="button" aria-label="Search" className="ml-[2px] flex h-[23px] w-10 items-center justify-center rounded-[3px] border border-[#b1b3b5] bg-linear-to-b from-white to-[#e3e4e6]">
          <Icon w={17} h={15}>
            <path d="M3 0h3v3H3zM9.500 0h3v3h-3z" fill="#4a4d50" />
            <path d="M2 3h5v4h2V3h5l2.500 8v3.500H11V10H5.500v4.500H0V11z" fill="#5f6265" />
            <path d="M0 11h5.500v4H0zM10.500 11H16v4h-5.500z" fill="#27292b" />
            <path d="M3 4.500 2 10M11 4.500 12 10" stroke="#c3c5c7" />
          </Icon>
        </button>
        <span className="ml-[2px] h-full w-px bg-[#c9cbcd]" />
      </div>
      <div className="relative mr-[18px] mb-1 ml-[97px]">
        <select aria-label="Selection filter" defaultValue="Smart" className="h-[21px] w-[154px] appearance-none border border-[#b9bbbd] bg-[#f7f7f8] pl-[7px] text-[11px]">
          <option>Smart</option>
        </select>
        <span className="pointer-events-none absolute inset-y-px right-px flex w-[14px] items-center justify-center border-l border-[#b9bbbd] bg-[#ecedef]">
          <Caret />
        </span>
      </div>
      {/* text pointer */}
      <Icon w={7} h={17} className="absolute top-2 left-[801px]">
        <path d="M0 .5h3M4 .5h3M0 16.500h3M4 16.500h3M3.500 1v15" stroke="#111" />
      </Icon>
    </footer>
  );
}

/* ---------- desktop taskbar ---------- */

function Taskbar() {
  return (
    <div className="flex h-10 shrink-0 items-stretch bg-[#020205] font-['Open_Sans','Noto_Sans',sans-serif] text-[11px] text-white">
      <IconButton label="Start" className="w-12">
        <Icon>
          <path d="M0 2.300 6.500 1.400v6.100H0zM7.500 1.200 16 0v7.500H7.500zM0 8.500h6.500v6.100L0 13.700zM7.500 8.500H16V16l-8.500-1.200z" fill="#fff" />
        </Icon>
      </IconButton>
      <input
        type="text"
        aria-label="Search"
        placeholder="Search the web and Windows"
        className="w-[344px] bg-[#333435] px-3 text-[14px] placeholder:text-[#9b9c9d]"
      />
      <IconButton label="Task View" className="w-12">
        <Icon w={20} h={15}>
          <path d="M4.500 1h11v13h-11z" stroke="#fff" strokeWidth="1.3" />
          <path d="M3 2.500H1V12h2M17 2.500h2V12h-2" stroke="#fff" strokeWidth="1.3" />
        </Icon>
      </IconButton>
      <IconButton label="File Explorer" className="w-[52px]">
        <Icon w={22} h={18}>
          <path d="M0 0h9l1 2h11v15H0z" fill="#e9cd6b" />
          <path d="M0 4h22v13H0z" fill="#f9e596" />
          <path d="M4 18v-6q0-2 2-2h10q2 0 2 2v6h-4v-4H8v4z" fill="#3fc1d6" />
        </Icon>
      </IconButton>
      <IconButton label="Browser" className="mr-1 w-[46px]">
        <Icon w={22} h={24}>
          <path d="M11 0 9 4C3 4 0 9 1 14c1 5 5 8 10 8s10-4 10-10c0-3-1-5-2-6l-2 1-3-3-2 1z" fill="#2f87b0" />
          <path d="M9 8c-3 1-5 5-3 8 2 4 8 4 10 0 1-2 1-4 0-6-1 4-3 5-5 4s-2-4 2-5c-1-1-2-2-4-1z" fill="#0c2b3c" />
          <path d="M3 10c1-3 4-5 8-4" stroke="#7fc8e6" strokeWidth="1.3" />
        </Icon>
      </IconButton>
      <button type="button" className="mr-[5px] ml-0.5 flex w-[152px] items-center gap-1.5 border-b-2 border-[#8ab4e4] pt-0.5 pl-[10px] whitespace-nowrap">
        <Icon w={18} h={18}>
          <path d="M9 9C5 8 4 4 7 1M9 9c3-3 7-2 8 2M9 9c1 4-2 8-7 7" stroke="#d5d5d5" strokeWidth="1.6" />
          <path d="M9 9c1-4 0-6-2-8M9 9c3 1 6 0 8 2" stroke="#555" />
        </Icon>
        Profile: Untitled - S...
      </button>
      <button type="button" className="flex w-40 items-center gap-1 border-b-2 border-[#8ab4e4] bg-[#38393b] pt-0.5 pl-[10px] whitespace-nowrap">
        <svg width="24" height="24" viewBox="0 0 24 24" className="shrink-0">
          <path d="M0 0h24v24H0z" fill="#fff" />
          <path d="M4 4h16v16H4z" fill="#d3d6d8" stroke="#85898c" />
          <path d="M9 4h11v10H9z" fill="#1f9fcb" />
          <path d="M9 4v10h11" stroke="#2b5868" fill="none" />
        </svg>
        CHANNEL_96_2012...
      </button>
      <div className="ml-auto flex items-center">
        <IconButton label="Hidden icons" className="mr-[10px]">
          <Icon w={12} h={8}><path d="m1 7 5-5.500L11 7" stroke="#fff" strokeWidth="1.5" /></Icon>
        </IconButton>
        <IconButton label="Notifications" className="mr-4">
          <Icon>
            <path d="M0 0h16v13h-6l-2 3-2-3H0z" fill="#fff" />
            <path d="M3 3.500h10M3 6.500h10M3 9.500h6" stroke="#111" />
          </Icon>
        </IconButton>
        <time className="mr-3 mb-1 flex flex-col text-center leading-[17px]">
          <span>1:30 PM</span>
          <span>9/7/2015</span>
        </time>
        <span className="mr-1 h-full w-px bg-[#55575a]" />
      </div>
    </div>
  );
}

export default function App() {
  return (
    <div className="flex h-screen flex-col overflow-hidden bg-[#fcfcfc] font-['Liberation_Sans',Arial,sans-serif]">
      <TitleBar />
      <TabBar />
      <Ribbon />
      <div className="flex min-h-0 flex-1">
        <TreePanel />
        <GraphicsArea />
      </div>
      <StatusBar />
      <Taskbar />
    </div>
  );
}
